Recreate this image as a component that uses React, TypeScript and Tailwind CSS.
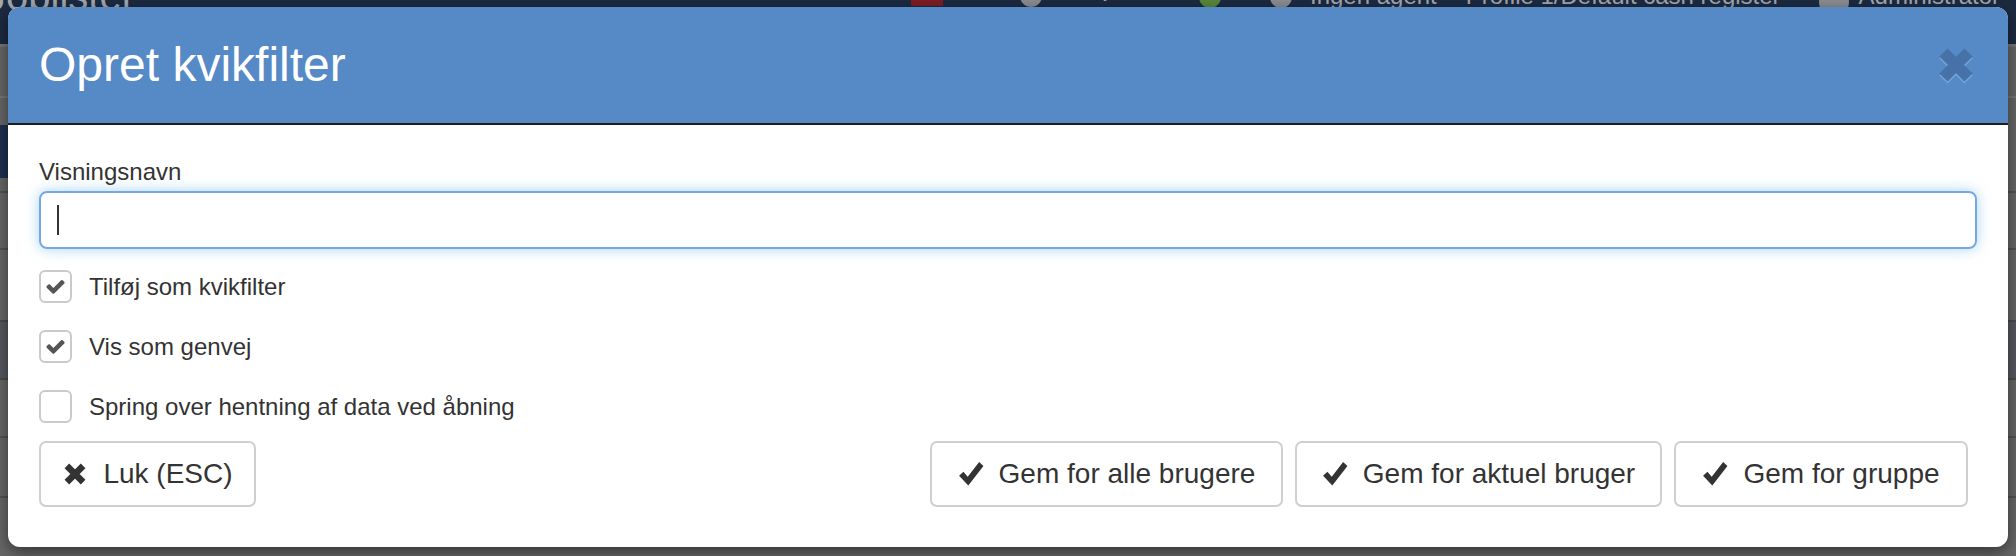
import React from "react";

function XIcon({ color, size, width = 6 }: { color: string; size: number; width?: number }) {
  return (
    <svg width={size} height={size} viewBox="0 0 24 24" fill="none">
      <path d="M4.5 4.5L19.5 19.5M19.5 4.5L4.5 19.5" stroke={color} strokeWidth={width} strokeLinecap="butt" />
    </svg>
  );
}

function OkIcon() {
  return (
    <svg width="26" height="26" viewBox="0 0 24 24">
      <polygon points="1,13.5 5,10 9,14.5 19.5,1 23.5,4.5 9.5,22.5" fill="#333" />
    </svg>
  );
}

function FaCheck() {
  return (
    <svg width="21" height="21" viewBox="0 0 1792 1792">
      <path
        d="M1671 566q0 40-28 68l-724 724-136 136q-28 28-68 28t-68-28l-136-136-362-362q-28-28-28-68t28-68l136-136q28-28 68-28t68 28l294 295 656-657q28-28 68-28t68 28l136 136q28 28 28 68z"
        fill="#555"
      />
    </svg>
  );
}

function CheckRow({ checked, label }: { checked?: boolean; label: string }) {
  return (
    <div className="flex items-center h-[33px]">
      <div className="w-[33px] h-[33px] rounded-[6px] border-2 border-[#cacaca] bg-white flex items-center justify-center shrink-0">
        {checked ? <FaCheck /> : null}
      </div>
      <span className="ml-[17px] text-[24px] leading-[33px] text-[#333]">{label}</span>
    </div>
  );
}

function Btn({ icon, label, w }: { icon: React.ReactNode; label: string; w: string }) {
  return (
    <button
      className={`${w} h-[66px] rounded-[7px] border-2 border-[#cfcfcf] bg-white flex items-center justify-center gap-[15px] text-[28px] leading-none text-[#333]`}
    >
      {icon}
      <span>{label}</span>
    </button>
  );
}

export default function App() {
  return (
    <div className="relative w-[2016px] h-[556px] overflow-hidden bg-[#676767] font-['Liberation_Sans',Arial,sans-serif]">
      {/* dimmed page behind the modal */}
      <div className="flex flex-col">
        <div className="h-[44px] bg-[#1c2a41] flex items-start overflow-hidden text-[24px] leading-none text-[#a3a7ae]">
          <span className="ml-[-14px] mt-[-24px] text-[40px] text-[#a3a7ae] w-[140px] shrink-0">Joblister</span>
          <div className="ml-[785px] mt-[-14px] w-[32px] h-[20px] bg-[#7c1c24] shrink-0" />
          <div className="ml-[77px] mt-[-15px] w-[22px] h-[22px] rounded-full bg-[#8a8c90] shrink-0" />
          <span className="ml-[58px] mt-[-16px] w-[12px] text-[20px] shrink-0">v</span>
          <div className="ml-[87px] mt-[-14px] w-[22px] h-[22px] rounded-full bg-[#58873a] shrink-0" />
          <div className="ml-[49px] mt-[-14px] w-[22px] h-[22px] rounded-full bg-[#8a8c90] shrink-0" />
          <span className="ml-[18px] mt-[-16px] shrink-0">Ingen agent</span>
          <span className="ml-[29px] mt-[-16px] shrink-0">Profile 1/Default cash register</span>
          <div className="ml-[38px] mt-[-12px] w-[30px] h-[28px] rounded-full bg-[#8a8c90] shrink-0" />
          <span className="ml-[10px] mt-[-16px] shrink-0">Administrator</span>
        </div>
        <div className="h-[54px] border-t-[3px] border-b-2 border-[#777]" />
        <div className="h-[27px]" />
        <div className="h-[53px] flex">
          <div className="w-[200px] bg-[#1e3050]" />
        </div>
        <div className="h-[15px] border-b-2 border-[#525252]" />
        <div className="h-[57px] border-b-2 border-[#525252]" />
        <div className="h-[70px]" />
        <div className="h-[60px] bg-[#555a60] border-y-2 border-[#4a4a4a]" />
        <div className="h-[58px] border-b-2 border-[#525252]" />
        <div className="h-[60px] border-b-2 border-[#525252]" />
      </div>

      {/* modal */}
      <div className="absolute left-[8px] top-[7px] w-[2000px] rounded-[12px] bg-white overflow-hidden shadow-[0_5px_15px_rgba(0,0,0,0.5)]">
        <div className="h-[118px] bg-[#558ac6] border-b-2 border-[#1e1e1e] flex items-center justify-between pl-[31px] pr-[32px]">
          <h4 className="text-[48px] leading-none text-white">Opret kvikfilter</h4>
          <div className="relative w-[40px] h-[40px]">
            <div className="absolute left-0 top-[2px]">
              <XIcon color="#77a4d9" size={40} width={7} />
            </div>
            <div className="absolute left-0 top-0">
              <XIcon color="#4672a8" size={40} width={7} />
            </div>
          </div>
        </div>
        <div className="pt-[33px] pb-[40px] px-[31px]">
          <label className="block text-[24px] leading-[28px] text-[#333]">Visningsnavn</label>
          <div className="mt-[5px] h-[58px] rounded-[8px] border-2 border-[#72a9e6] shadow-[0_0_14px_rgba(102,175,233,0.55)] flex items-center pl-[16px]">
            <div className="w-[2px] h-[30px] bg-[#333]" />
          </div>
          <div className="mt-[21px] flex flex-col gap-[27px]">
            <CheckRow checked label="Tilføj som kvikfilter" />
            <CheckRow checked label="Vis som genvej" />
            <CheckRow label="Spring over hentning af data ved åbning" />
          </div>
          <div className="mt-[18px] flex justify-between pr-[9px]">
            <Btn w="w-[217px]" icon={<XIcon color="#333" size={26} width={6} />} label="Luk (ESC)" />
            <div className="flex gap-[12px]">
              <Btn w="w-[353px]" icon={<OkIcon />} label="Gem for alle brugere" />
              <Btn w="w-[367px]" icon={<OkIcon />} label="Gem for aktuel bruger" />
              <Btn w="w-[294px]" icon={<OkIcon />} label="Gem for gruppe" />
            </div>
          </div>
        </div>
      </div>
    </div>
  );
}
